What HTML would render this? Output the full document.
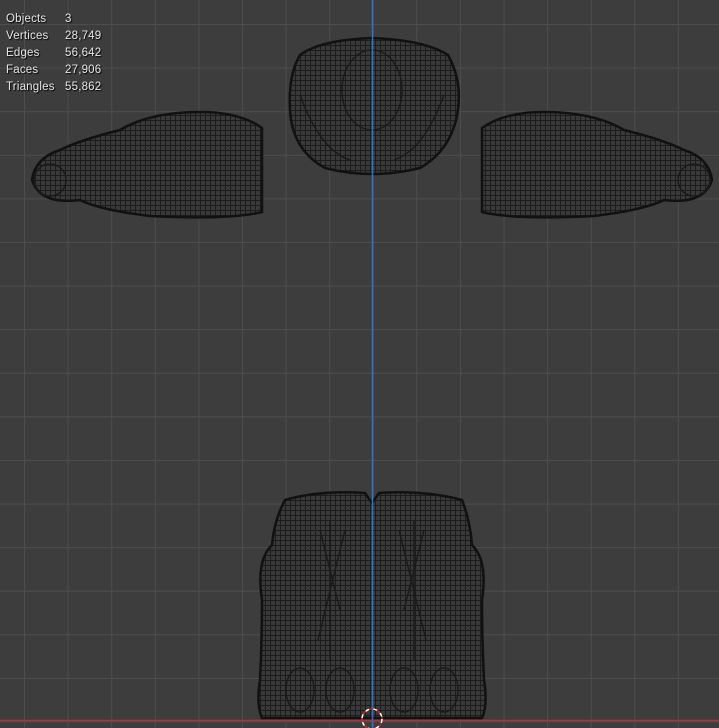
<!DOCTYPE html>
<html><head><meta charset="utf-8"><style>
html,body{margin:0;padding:0;}
body{width:719px;height:728px;overflow:hidden;background:#3d3d3d;position:relative;font-family:"Liberation Sans",sans-serif;}
#grid{position:absolute;inset:0;background-image:linear-gradient(to right,#4d4d4d 1px,transparent 1px),linear-gradient(to bottom,#4d4d4d 1px,transparent 1px);background-size:43.6px 43.6px;background-position:24px 24px;}
#stats{position:absolute;left:6px;top:11px;color:#e6e6e6;font-size:11.5px;letter-spacing:0.2px;line-height:17px;text-shadow:1px 1px 1px #000;}
#stats div{display:flex}
#stats span{width:59px;display:inline-block}
svg{position:absolute;left:0;top:0}
</style></head><body>
<div id="grid"></div>
<svg width="719" height="728">
<defs>
<pattern id="m" width="5" height="5" patternUnits="userSpaceOnUse">
<rect width="5" height="5" fill="#393939"/>
<path d="M0 0.5H5M0.5 0V5" stroke="#1c1c1c" stroke-width="1"/>
</pattern>
</defs>
<g fill="url(#m)" stroke="#111" stroke-width="2.5">
<path d="M300 55 Q320 40 372 38 Q425 40 448 55 Q462 80 458 110 Q452 150 420 168 Q372 180 325 168 Q292 150 290 110 Q288 75 300 55Z"/>
<path d="M262 128 L262 212 Q230 220 150 216 Q100 210 80 200 Q40 205 32 180 Q35 158 60 150 Q80 140 120 130 Q150 112 200 112 Q240 112 262 128Z"/>
<path d="M482 128 L482 212 Q514 220 594 216 Q644 210 664 200 Q704 205 712 180 Q709 158 684 150 Q664 140 624 130 Q594 112 544 112 Q504 112 482 128Z"/>
<path d="M285 500 Q320 490 365 493 L372 503 L379 493 Q424 490 462 500 Q470 520 472 545 Q488 560 482 600 Q482 640 484 680 Q488 705 482 718 L262 718 Q256 705 260 680 Q262 640 262 600 Q256 560 272 545 Q274 520 285 500Z"/>
</g>
<g fill="none" stroke="#1a1a1a" stroke-width="1.5">
<path d="M320 530 L340 610 M345 530 L318 640 M330 520 L330 660"/>
<path d="M424 530 L404 610 M399 530 L426 640 M414 520 L414 660"/>
<ellipse cx="300" cy="690" rx="14" ry="22"/><ellipse cx="340" cy="690" rx="14" ry="22"/>
<ellipse cx="404" cy="690" rx="14" ry="22"/><ellipse cx="444" cy="690" rx="14" ry="22"/>
<ellipse cx="372" cy="90" rx="30" ry="40"/>
<path d="M300 95 Q320 150 350 160 M444 95 Q424 150 394 160"/>
<circle cx="50" cy="180" r="16"/><circle cx="694" cy="180" r="16"/>
</g>
<line x1="372.5" y1="0" x2="372.5" y2="728" stroke="#2f74cc" stroke-width="1.5"/>
<line x1="0" y1="720.5" x2="719" y2="720.5" stroke="#b3303f" stroke-width="1.5"/>
<circle cx="372" cy="719" r="10" fill="none" stroke="#fff" stroke-width="1.5" stroke-dasharray="4 4"/>
<circle cx="372" cy="719" r="10" fill="none" stroke="#d02020" stroke-width="1.5" stroke-dasharray="4 4" stroke-dashoffset="4"/>
</svg>
<div id="stats">
<div><span>Objects</span>3</div>
<div><span>Vertices</span>28,749</div>
<div><span>Edges</span>56,642</div>
<div><span>Faces</span>27,906</div>
<div><span>Triangles</span>55,862</div>
</div>
</body></html>
